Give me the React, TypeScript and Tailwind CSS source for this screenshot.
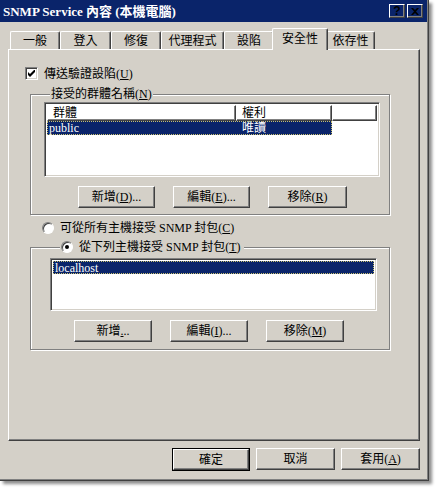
import React from 'react';

const raised =
  'border border-t-white border-l-white border-r-[#404040] border-b-[#404040] shadow-[inset_-1px_-1px_#808080]';
const sunken =
  'border border-t-[#808080] border-l-[#808080] border-r-white border-b-white shadow-[inset_1px_1px_#404040,inset_-1px_-1px_#d4d0c8]';
const etched = 'border border-[#808080] shadow-[inset_1px_1px_#fff,1px_1px_#fff]';

interface BtnProps {
  children: React.ReactNode;
  isDefault?: boolean;
  w?: string;
}

const Btn: React.FC<BtnProps> = ({ children, isDefault = false, w = 'w-[77px]' }) => {
  if (isDefault) {
    return (
      <div className={`${w} h-[23px] border border-black`}>
        <div className={`h-full w-full ${raised} flex items-center justify-center`}>{children}</div>
      </div>
    );
  }
  return <div className={`${w} h-[22px] ${raised} flex items-center justify-center`}>{children}</div>;
};

const Radio: React.FC<{ checked?: boolean }> = ({ checked = false }) => (
  <div className="w-[12px] h-[12px] rounded-full bg-white border border-t-[#808080] border-l-[#808080] border-r-white border-b-white shadow-[inset_1px_1px_#404040] flex items-center justify-center">
    {checked && <div className="w-[4px] h-[4px] rounded-full bg-black" />}
  </div>
);

const tabs: { label: string; w: string; active?: boolean }[] = [
  { label: '一般', w: 'w-[50px]' },
  { label: '登入', w: 'w-[51px]' },
  { label: '修復', w: 'w-[50px]' },
  { label: '代理程式', w: 'w-[63px]' },
  { label: '設陷', w: 'w-[50px]' },
  { label: '安全性', w: 'w-[56px]', active: true },
  { label: '依存性', w: 'w-[49px]' },
];

export default function App() {
  return (
    <div className="w-[436px] h-[488px] bg-white text-[12px] leading-none text-black font-['Liberation_Serif','Noto_Sans_CJK_TC',serif]">
      <div className="w-[429px] h-[481px] bg-[#d4d0c8] flex flex-col shadow-[inset_-1px_-1px_#404040,inset_-2px_-2px_#808080,3px_3px_3px_rgba(0,0,0,0.45)]">
        {/* title bar */}
        <div className="w-[427px] h-[22px] bg-[#0a246a] flex items-center pl-[3px] pr-[4px]">
          <span className="text-white font-bold text-[13px] flex-1">SNMP Service 內容 (本機電腦)</span>
          <div className="flex gap-[2px]">
            <div className={`w-[16px] h-[14px] ${raised} flex items-center justify-center font-bold text-[12px] font-['Liberation_Sans',sans-serif]`}>
              ?
            </div>
            <div className={`w-[16px] h-[14px] ${raised} flex items-center justify-center`}>
              <svg width="8" height="7" viewBox="0 0 8 7">
                <path d="M0 0h2l2 2 2-2h2L5 3.5 8 7H6L4 5 2 7H0l3-3.5z" fill="#000" />
              </svg>
            </div>
          </div>
        </div>

        {/* tabs */}
        <div className="h-[21px] mt-[6px] pl-[10px] flex items-end">
          {tabs.map((t) =>
            t.active ? (
              <div
                key={t.label}
                className={`${t.w} h-[22px] -mx-[2px] -mb-px relative z-10 bg-[#d4d0c8] border-t border-l border-r border-t-white border-l-white border-r-[#404040] shadow-[inset_-1px_0_#808080] rounded-t-[2px] flex items-center justify-center pb-[2px]`}
              >
                {t.label}
              </div>
            ) : (
              <div
                key={t.label}
                className={`${t.w} h-[18px] border-t border-l border-r border-t-white border-l-white border-r-[#404040] shadow-[inset_-1px_0_#808080] rounded-t-[2px] flex items-center justify-center pt-[1px]`}
              >
                {t.label}
              </div>
            )
          )}
        </div>

        {/* panel */}
        <div className={`ml-[8px] w-[412px] h-[392px] ${raised} flex flex-col`}>
          <div className="mt-[17px] ml-[16px] flex items-center gap-[6px] h-[13px]">
            <div className={`w-[13px] h-[13px] bg-white ${sunken} flex items-center justify-center`}>
              <svg width="7" height="7" viewBox="0 0 7 7">
                <path d="M0 2v3l2 2 5-5V-1L2 4z" fill="#000" />
              </svg>
            </div>
            <span>
              傳送驗證設陷(<u>U</u>)
            </span>
          </div>

          <fieldset className={`mt-[6px] ml-[21px] w-[360px] ${etched} pl-[13px] pb-[6px]`}>
            <legend className="ml-[6px] px-[1px] h-[16px] flex items-center bg-[#d4d0c8]">
              接受的群體名稱(<u>N</u>)
            </legend>
            <div className={`w-[336px] h-[75px] bg-white ${sunken} p-[2px] flex flex-col`}>
              <div className="flex h-[16px]">
                <div className={`w-[189px] ${raised} flex items-center pl-[5px]`}>群體</div>
                <div className={`w-[96px] ${raised} flex items-center pl-[5px]`}>權利</div>
                <div className={`flex-1 ${raised}`} />
              </div>
              <div className="flex h-[14px] w-[285px] bg-[#0a246a] text-white items-center outline-1 outline-dotted outline-[#c8c070] -outline-offset-1">
                <div className="w-[189px] pl-[2px]">public</div>
                <div className="w-[96px] pl-[6px]">唯讀</div>
              </div>
            </div>
            <div className="mt-[9px] flex gap-[18px] ml-[34px]">
              <Btn>
                新增(<u>D</u>)...
              </Btn>
              <Btn>
                編輯(<u>E</u>)...
              </Btn>
              <Btn w="w-[79px]">
                移除(<u>R</u>)
              </Btn>
            </div>
          </fieldset>

          <div className="mt-[5px] ml-[33px] h-[16px] flex items-center gap-[6px]">
            <Radio />
            <span>
              可從所有主機接受 SNMP 封包(<u>C</u>)
            </span>
          </div>

          <fieldset className={`mt-[3px] ml-[21px] w-[360px] ${etched} pl-[19px] pb-[7px]`}>
            <legend className="ml-[10px] px-[1px] h-[16px] flex items-center gap-[6px] bg-[#d4d0c8]">
              <Radio checked />
              <span className="pr-[2px]">
                從下列主機接受 SNMP 封包(<u>T</u>)
              </span>
            </legend>
            <div className={`mt-[3px] w-[327px] h-[53px] bg-white ${sunken} p-[2px]`}>
              <div className="h-[13px] bg-[#0a246a] text-white flex items-center pl-[2px] outline-1 outline-dotted outline-[#c8c070] -outline-offset-1">
                localhost
              </div>
            </div>
            <div className="mt-[9px] flex gap-[18px] ml-[24px]">
              <Btn w="w-[78px]">
                新增<u>.</u>..
              </Btn>
              <Btn w="w-[78px]">
                編輯(<u>I</u>)...
              </Btn>
              <Btn w="w-[78px]">
                移除(<u>M</u>)
              </Btn>
            </div>
          </fieldset>
        </div>

        {/* bottom buttons */}
        <div className="mt-[7px] ml-[172px] flex gap-[6px]">
          <Btn isDefault w="w-[78px]">
            確定
          </Btn>
          <Btn w="w-[79px]">取消</Btn>
          <Btn w="w-[79px]">
            套用(<u>A</u>)
          </Btn>
        </div>
      </div>
    </div>
  );
}
